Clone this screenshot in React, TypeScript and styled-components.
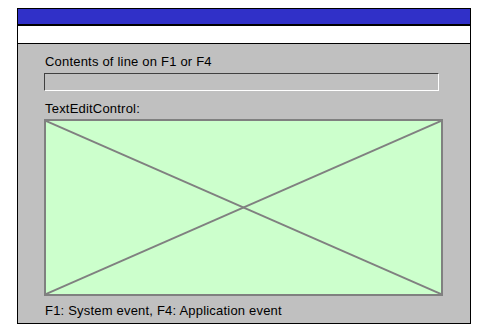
import styled, { createGlobalStyle } from "styled-components";

const Global = createGlobalStyle`
  body {
    margin: 0;
    background: #ffffff;
    font-family: "Liberation Sans", Arial, sans-serif;
  }
`;

const Frame = styled.div`
  margin: 8px 0 0 17px;
  width: 452px;
  height: 314px;
  border: 1px solid #000;
  display: flex;
  flex-direction: column;
  background: #c0c0c0;
`;

const TitleBar = styled.div`
  height: 15px;
  background: #3030c8;
  border-bottom: 2px solid #000;
`;

const MenuBar = styled.div`
  height: 17px;
  background: #fff;
  border-bottom: 1px solid #000;
`;

const Body = styled.div`
  flex: 1;
  display: flex;
  flex-direction: column;
  padding: 10px 0 0 26px;
`;

const Label = styled.div<{ $gap: number }>`
  font-size: 13px;
  line-height: 15px;
  letter-spacing: 0.2px;
  padding-left: 1px;
  color: #000;
  margin-bottom: ${(p) => p.$gap}px;
`;

const LineField = styled.div`
  width: 393px;
  height: 16px;
  border-top: 1px solid #404040;
  border-left: 1px solid #404040;
  border-right: 1px solid #fff;
  border-bottom: 1px solid #fff;
  margin-bottom: 10px;
`;

const EditBox = styled.div`
  width: 395px;
  height: 173px;
  border: 2px solid #808080;
  background: #ccffcc;
  margin-bottom: 7px;

  svg {
    display: block;
    width: 100%;
    height: 100%;
  }
`;

export default function App() {
  return (
    <>
      <Global />
      <Frame>
        <TitleBar />
        <MenuBar />
        <Body>
          <Label $gap={4}>Contents of line on F1 or F4</Label>
          <LineField />
          <Label $gap={3}>TextEditControl:</Label>
          <EditBox>
            <svg viewBox="0 0 395 173" preserveAspectRatio="none">
              <line x1="0" y1="0" x2="395" y2="173" stroke="#808080" strokeWidth="2" />
              <line x1="0" y1="173" x2="395" y2="0" stroke="#808080" strokeWidth="2" />
            </svg>
          </EditBox>
          <Label $gap={0}>F1: System event, F4: Application event</Label>
        </Body>
      </Frame>
    </>
  );
}
